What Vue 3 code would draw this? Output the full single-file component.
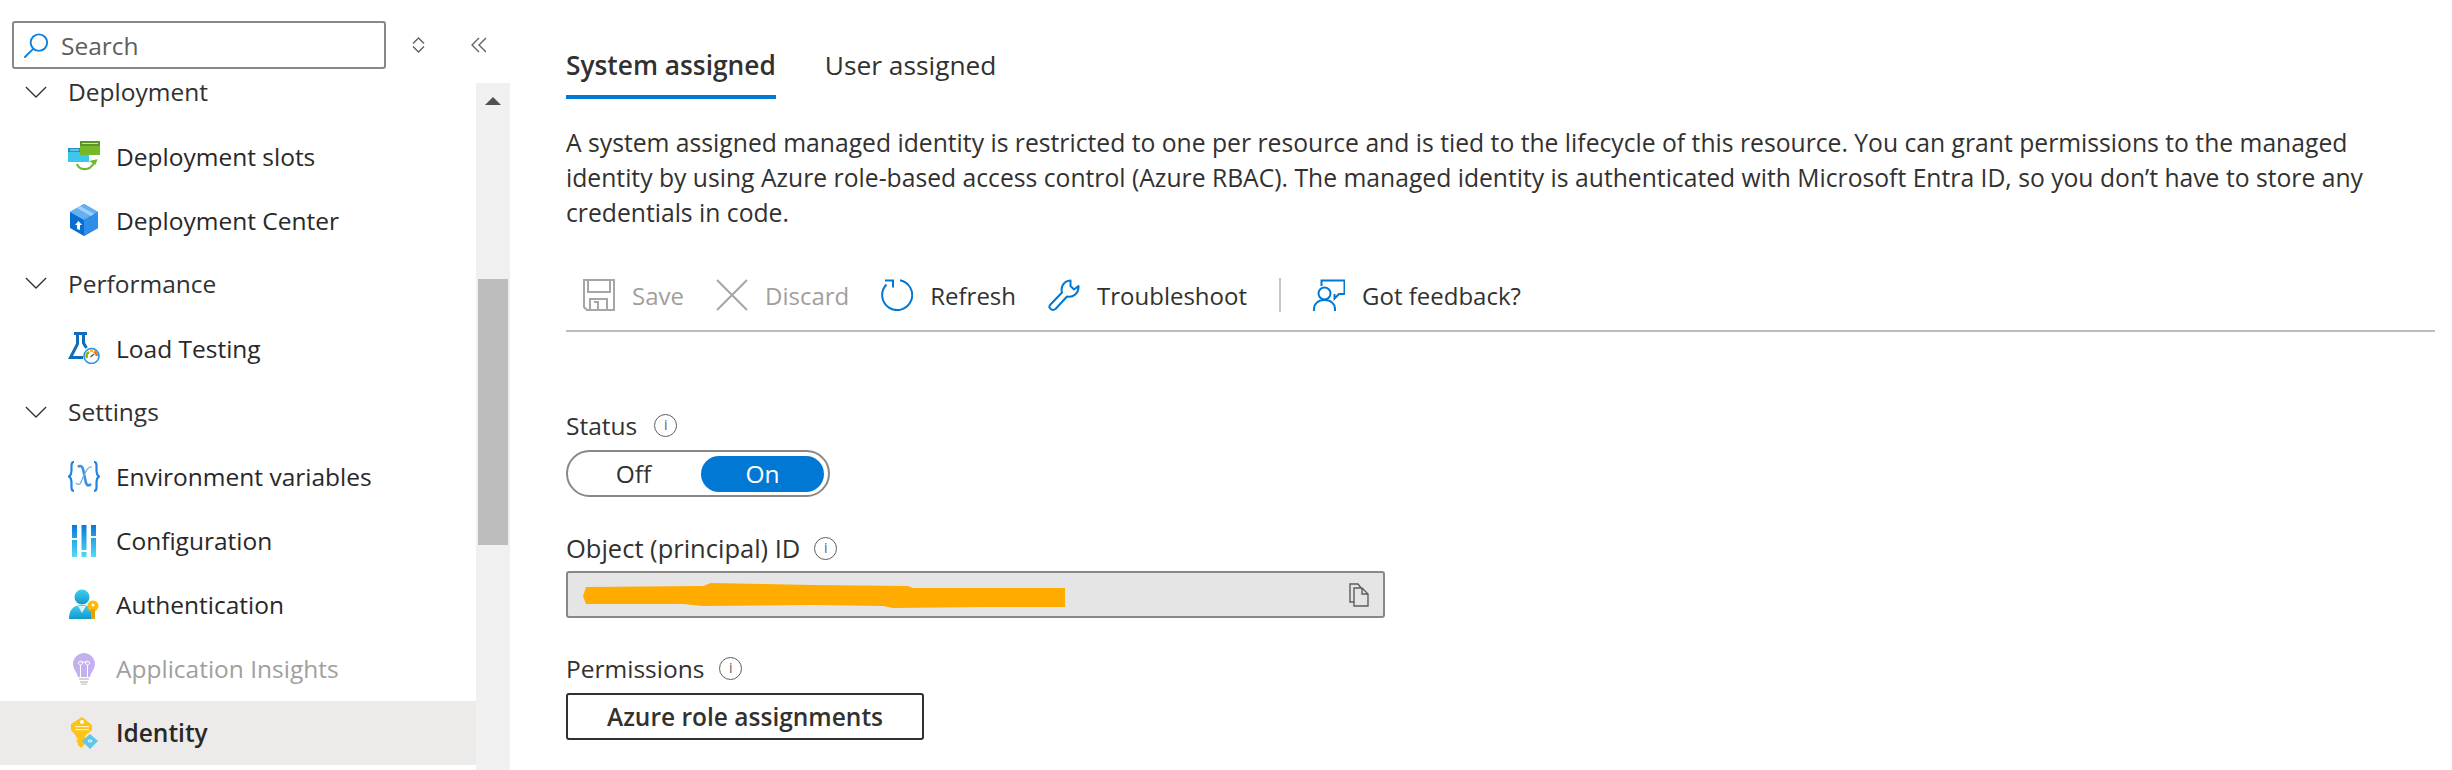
<script setup>
const infoLabels = {
  status: 'Status',
  object: 'Object (principal) ID',
  permissions: 'Permissions'
}
</script>

<template>
  <div class="page">
    <aside class="sidebar">
      <div class="search-row">
        <div class="search">
          <svg class="search-icon" viewBox="0 0 26 26" fill="none" stroke="#0f82e0" stroke-width="2">
            <circle cx="15.5" cy="10" r="8.6" />
            <path d="M9.5 16.5 1 25" stroke-linecap="round" />
          </svg>
          <span>Search</span>
        </div>
        <svg class="mini-btn updown" viewBox="0 0 13 16" fill="none" stroke="#605e5c" stroke-width="1.3">
          <path d="M1 6.500 6.500 1l5.500 5.500M1 9.500 6.500 15l5.500-5.500" />
        </svg>
        <svg class="mini-btn collapse" viewBox="0 0 15 16" fill="none" stroke="#605e5c" stroke-width="1.3">
          <path d="M8 1 1 8l7 7M15 1 8 8l7 7" />
        </svg>
      </div>
      <div class="nav-area">
        <nav class="nav">
          <div class="head first">
            <svg class="chev" viewBox="0 0 24 13" fill="none" stroke="#323130" stroke-width="1.4"><path d="M1 1l11 11L23 1" /></svg>
            <span>Deployment</span>
          </div>
          <div class="item">
            <svg class="ico" viewBox="0 0 32 32">
              <rect x="0" y="8" width="21" height="14" fill="#3cc8ea" />
              <rect x="0" y="8" width="21" height="4" fill="#1b93c9" />
              <rect x="2" y="9.5" width="9" height="1" fill="#bfe9f5" />
              <rect x="12" y="1" width="20" height="14" fill="#76b82a" />
              <rect x="12" y="1" width="20" height="5" fill="#5e9624" />
              <rect x="14" y="3" width="16" height="1" fill="#c9e3a3" />
              <path d="M9 24c2 6 12 8 17-1" fill="none" stroke="#6dbb2a" stroke-width="2.2" />
              <path d="M21 20h9l-3 5z" fill="#6dbb2a" transform="rotate(-12 26 22)" />
            </svg>
            <span>Deployment slots</span>
          </div>
          <div class="item">
            <svg class="ico" viewBox="0 0 32 32">
              <path d="M16 0 30 8v16l-14 8-14-8V8z" fill="#0a6ed1" />
              <path d="M16 0 30 8l-14 8L2 8z" fill="#63b0f3" />
              <path d="M16 16l14-8v16l-14 8z" fill="#2f8fe8" />
              <path d="M9 4l14 8 3-2L12 2z" fill="#a5d2f7" />
              <path d="M9 25v-4H7l3.500-4 3.500 4h-2v5z" fill="#fff" />
            </svg>
            <span>Deployment Center</span>
          </div>
          <div class="head">
            <svg class="chev" viewBox="0 0 24 13" fill="none" stroke="#323130" stroke-width="1.4"><path d="M1 1l11 11L23 1" /></svg>
            <span>Performance</span>
          </div>
          <div class="item">
            <svg class="ico" viewBox="0 0 32 32">
              <path d="M6 1.500H19M9.500 2v10L2.500 25.500H15M15.500 2v9l3 5" fill="none" stroke="#0f6cbd" stroke-width="3" />
              <circle cx="23.500" cy="24" r="7.500" fill="#fff" stroke="#2b8ee0" stroke-width="1.600" />
              <path d="M19 26a5 5 0 0 1 2-6" fill="none" stroke="#7fba00" stroke-width="2.400" />
              <path d="M22 19a5 5 0 0 1 3 0" fill="none" stroke="#ffb900" stroke-width="2.400" />
              <path d="M26 19.500a5 5 0 0 1 2.800 4.500" fill="none" stroke="#e8711a" stroke-width="2.400" />
              <path d="M22.500 25l3.500-3" stroke="#605e5c" stroke-width="1.500" />
            </svg>
            <span>Load Testing</span>
          </div>
          <div class="head">
            <svg class="chev" viewBox="0 0 24 13" fill="none" stroke="#323130" stroke-width="1.4"><path d="M1 1l11 11L23 1" /></svg>
            <span>Settings</span>
          </div>
          <div class="item">
            <svg class="ico" viewBox="0 0 32 32" fill="none">
              <path d="M6 1C3 1 3.500 4 3.500 9c0 4-1 5.500-2.500 6.500 1.500 1 2.500 2.500 2.500 6.500 0 5-.5 8 2.500 8" stroke="#1b84e4" stroke-width="2.200" />
              <path d="M26 1c3 0 2.500 3 2.500 8 0 4 1 5.500 2.500 6.500-1.500 1-2.500 2.500-2.500 6.500 0 5 .5 8-2.500 8" stroke="#1b84e4" stroke-width="2.200" />
              <path d="M10 6c2-2 4-1 5 2l3 14c1 3 3 3 5 1" stroke="#3d8fe6" stroke-width="2.600" />
              <path d="M24 6c-3-1-5 2-7 6l-4 9c-1 3-3 3-5 1" stroke="#6fb0ee" stroke-width="1.300" />
            </svg>
            <span>Environment variables</span>
          </div>
          <div class="item">
            <svg class="ico" viewBox="0 0 32 32">
              <defs>
                <linearGradient id="cfg" x1="0" y1="0" x2="0" y2="1">
                  <stop offset="0" stop-color="#0a78d8" />
                  <stop offset="1" stop-color="#4fdcf7" />
                </linearGradient>
              </defs>
              <rect x="4" y="0" width="5" height="32" fill="url(#cfg)" />
              <rect x="13.500" y="0" width="5" height="32" fill="url(#cfg)" />
              <rect x="23" y="0" width="5" height="32" fill="url(#cfg)" />
              <rect x="3" y="13" width="7" height="2" fill="#fff" />
              <rect x="12.500" y="25" width="7" height="2" fill="#fff" />
              <rect x="22" y="11" width="7" height="2" fill="#fff" />
            </svg>
            <span>Configuration</span>
          </div>
          <div class="item">
            <svg class="ico" viewBox="0 0 32 32">
              <defs>
                <linearGradient id="usr" x1="0" y1="0" x2="0" y2="1">
                  <stop offset="0" stop-color="#3fd0f5" />
                  <stop offset="1" stop-color="#1497c9" />
                </linearGradient>
              </defs>
              <circle cx="14" cy="8" r="7.500" fill="url(#usr)" />
              <path d="M1 30c0-9 4-14 13-14s13 5 13 14z" fill="url(#usr)" />
              <path d="M10 17h8l-4 7z" fill="#d9f3fb" />
              <circle cx="25" cy="17" r="5.500" fill="#ffb900" />
              <circle cx="25" cy="16" r="1.500" fill="#fff" />
              <path d="M23 20h4v10h-4z" fill="#e8a100" />
            </svg>
            <span>Authentication</span>
          </div>
          <div class="item dim">
            <svg class="ico" viewBox="0 0 32 32">
              <path d="M16 0c6 0 11 5 11 11 0 5-4 8-5 13H10C9 19 5 16 5 11 5 5 10 0 16 0z" fill="#c4b0ee" />
              <path d="M12.500 24V12M19.500 24V12M12.500 12a2 2 0 1 1 .01 0M19.500 12a2 2 0 1 1 .01 0M12.500 9h7" fill="none" stroke="#fff" stroke-width="1" />
              <rect x="11" y="25" width="10" height="2" fill="#d4d4d4" />
              <rect x="12" y="28" width="8" height="2" fill="#d4d4d4" />
              <rect x="13" y="30.500" width="6" height="1.500" fill="#d4d4d4" />
            </svg>
            <span>Application Insights</span>
          </div>
          <div class="item current">
            <svg class="ico" viewBox="0 0 32 32">
              <path d="M14 0 24 8v5l-7 6v8l-4 4-3-3v-2l-2-2 2-2-2-2v-1l-5-6V7z" fill="#fcc419" />
              <circle cx="14" cy="5" r="2" fill="#fff" />
              <rect x="7" y="9" width="14" height="1.200" fill="#fff3c4" />
              <rect x="7" y="12" width="14" height="1.200" fill="#fff3c4" />
              <path d="M22 17l8 7-8 8-8-8z" fill="#5ec6ea" />
              <path d="M19.500 24l2-2v4zM24.500 24l-2-2v4z" fill="#fff" />
            </svg>
            <span>Identity</span>
          </div>
        </nav>
        <div class="track">
          <span class="arrow"></span>
          <div class="thumb"></div>
        </div>
      </div>
    </aside>

    <main class="main">
      <div class="tabs">
        <div class="tab active">System assigned</div>
        <div class="tab">User assigned</div>
      </div>
      <p class="intro">
        A system assigned managed identity is restricted to one per resource and is tied to the lifecycle of this resource. You can grant permissions to the managed identity by using Azure role-based access control (Azure RBAC). The managed identity is authenticated with Microsoft Entra ID, so you don’t have to store any credentials in code.
      </p>

      <div class="toolbar">
        <div class="tool off">
          <svg class="tool-ico" viewBox="0 0 32 32" fill="none" stroke="#a6a6a6" stroke-width="2">
            <path d="M1 1h30v30H4l-3-3zM5 1v12h22V1M7 31V20h17v11M11 23h4v8" />
          </svg>
          <span>Save</span>
        </div>
        <div class="tool off">
          <svg class="tool-ico" viewBox="0 0 32 32" fill="none" stroke="#a6a6a6" stroke-width="2">
            <path d="M1 1l30 30M31 1 1 31" />
          </svg>
          <span>Discard</span>
        </div>
        <div class="tool">
          <svg class="tool-ico" viewBox="0 0 32 32" fill="none" stroke="#0078d4" stroke-width="2">
            <path d="M19 1.300A15 15 0 1 1 5.500 5.500" />
            <path d="M4 1.500h8v7" />
          </svg>
          <span>Refresh</span>
        </div>
        <div class="tool">
          <svg class="tool-ico" viewBox="0 0 32 32" fill="none" stroke="#0078d4" stroke-width="2" stroke-linejoin="round">
            <path d="M2 26 14 13.500C12.500 8 15.500 2 22.500 1.500V7L26 10.500 30.500 7C31 14 25 19 19 17.500L7.500 30C4 32.500 0 29 2 26z" />
          </svg>
          <span>Troubleshoot</span>
        </div>
        <div class="tool-sep"></div>
        <div class="tool">
          <svg class="tool-ico" viewBox="0 0 32 32" fill="none" stroke="#0078d4" stroke-width="2">
            <path d="M8.500 7V1.500H31.500V15H26l-4.500 4.500V15" />
            <circle cx="11.500" cy="14.500" r="6" />
            <path d="M1 32v-2c0-5 4-9 10.500-9S22 25 22 30v2" />
          </svg>
          <span>Got feedback?</span>
        </div>
      </div>

      <div class="fields">
        <div class="label">
          <span>{{ infoLabels.status }}</span>
          <span class="info">i</span>
        </div>
        <div class="toggle">
          <span class="opt off-opt">Off</span>
          <span class="opt on">On</span>
        </div>

        <div class="label object">
          <span>{{ infoLabels.object }}</span>
          <span class="info">i</span>
        </div>
        <div class="readonly">
          <svg class="redact" viewBox="0 0 482 26" preserveAspectRatio="none">
            <path d="M3 5 120 4 128 1 180 2 230 3 325 4 330 6 482 6 482 25 400 25 310 26 300 24 230 23 120 24 100 22 3 22 0 14z" fill="#ffab00" />
          </svg>
          <svg class="copy" viewBox="0 0 20 24" fill="none" stroke="#605e5c" stroke-width="1.400">
            <path d="M5 19H1V1h8l3 4" />
            <path d="M5 5h8l6 6v12H5zM13 5v6h6" />
          </svg>
        </div>

        <div class="label permissions">
          <span>{{ infoLabels.permissions }}</span>
          <span class="info">i</span>
        </div>
        <button class="role-btn">Azure role assignments</button>
      </div>
    </main>
  </div>
</template>

<style>
html, body { margin: 0; padding: 0; overflow: hidden; background: #fff; }
</style>

<style scoped>
.page {
  display: flex;
  width: 2452px;
  height: 770px;
  overflow: hidden;
  background: #fff;
  font-family: "Open Sans", "Noto Sans", sans-serif;
  font-size: 24.500px;
  color: #323130;
}
.sidebar {
  width: 510px;
  flex: none;
  display: flex;
  flex-direction: column;
}
.search-row {
  height: 83px;
  flex: none;
  display: flex;
  align-items: flex-start;
  padding: 21px 0 0 12px;
  box-sizing: border-box;
}
.search {
  width: 374px;
  height: 48px;
  box-sizing: border-box;
  border: 2px solid #8a8886;
  border-radius: 3px;
  display: flex;
  align-items: center;
  padding-left: 10px;
  gap: 12px;
  color: #605e5c;
}
.search-icon { width: 25px; height: 25px; flex: none; }
.mini-btn { flex: none; }
.updown { width: 13px; height: 16px; margin: 16px 0 0 26px; }
.collapse { width: 15px; height: 16px; margin: 16px 0 0 46px; }
.nav-area {
  flex: 1;
  min-height: 0;
  display: flex;
}
.nav {
  width: 476px;
  flex: none;
}
.head, .item {
  height: 64.100px;
  display: flex;
  align-items: center;
  box-sizing: border-box;
}
.head { padding: 0 0 2px 25px; }
.head.first {
  height: 41.100px;
  line-height: 18px;
  padding-bottom: 23px;
}
.chev { width: 22px; height: 12px; margin-right: 21px; flex: none; }
.item { padding-left: 68px; color: #292827; }
.ico { width: 32px; height: 32px; margin-right: 16px; flex: none; }
.dim { color: #a19f9d; }
.current { background: #edebe9; font-weight: 600; }
.track {
  width: 34px;
  flex: none;
  background: #f0f0f0;
  position: relative;
}
.arrow {
  position: absolute;
  left: 9px;
  top: 14px;
  width: 0;
  height: 0;
  border-left: 8px solid transparent;
  border-right: 8px solid transparent;
  border-bottom: 8px solid #505050;
}
.thumb {
  position: absolute;
  left: 2px;
  top: 196px;
  width: 30px;
  height: 266px;
  background: #bdbdbd;
}
.main {
  flex: 1;
  padding-left: 56px;
  padding-right: 17px;
  min-width: 0;
}
.tabs {
  display: flex;
  gap: 49px;
  padding-top: 42px;
}
.tab {
  height: 57px;
  line-height: 46px;
  box-sizing: border-box;
  font-size: 26.300px;
}
.tab.active {
  font-weight: 600;
  border-bottom: 4px solid #0078d4;
}
.intro {
  margin: 26px 0 0;
  line-height: 35px;
  width: 1830px;
  font-size: 24.700px;
}
.toolbar {
  margin-top: 35px;
  height: 60px;
  display: flex;
  align-items: center;
  border-bottom: 2px solid #bdbdbd;
  padding: 0 0 5px 17px;
  font-size: 24px;
}
.tool {
  display: flex;
  align-items: center;
  gap: 17px;
  margin-right: 32px;
}
.off { color: #a19f9d; }
.tool-ico { width: 32px; height: 32px; flex: none; }
.tool-sep {
  width: 2px;
  height: 34px;
  background: #c8c6c4;
  margin-right: 32px;
}
.fields { padding-top: 75px; }
.label {
  display: flex;
  align-items: center;
  gap: 17px;
  height: 36px;
}
.info {
  width: 23px;
  height: 23px;
  box-sizing: border-box;
  border: 1.500px solid #605e5c;
  border-radius: 50%;
  font-size: 14px;
  line-height: 20px;
  text-align: center;
  color: #605e5c;
}
.toggle {
  margin-top: 7px;
  width: 264px;
  height: 47px;
  box-sizing: border-box;
  border: 2px solid #8a8886;
  border-radius: 24px;
  display: flex;
  align-items: center;
  padding: 0 4px;
}
.opt {
  width: 130px;
  height: 36px;
  box-sizing: border-box;
  line-height: 36px;
  text-align: center;
  border-radius: 18px;
}
.off-opt { padding-right: 6px; }
.opt.on {
  width: 124px;
  background: #0078d4;
  color: #fff;
}
.object { margin-top: 33px; font-size: 25.500px; gap: 14px; }
.readonly {
  margin-top: 5px;
  width: 819px;
  height: 47px;
  box-sizing: border-box;
  background: #e5e5e5;
  border: 2px solid #8a8886;
  border-radius: 3px;
  display: flex;
  align-items: center;
  justify-content: space-between;
  padding: 0 14px 0 15px;
}
.redact { width: 482px; height: 26px; }
.copy { width: 20px; height: 24px; }
.permissions { margin-top: 32px; gap: 15px; }
.role-btn {
  display: block;
  margin-top: 7px;
  width: 358px;
  height: 47px;
  box-sizing: border-box;
  background: #fff;
  border: 2px solid #323130;
  border-radius: 3px;
  font: inherit;
  font-weight: 600;
  color: #323130;
  padding: 0;
}
</style>
